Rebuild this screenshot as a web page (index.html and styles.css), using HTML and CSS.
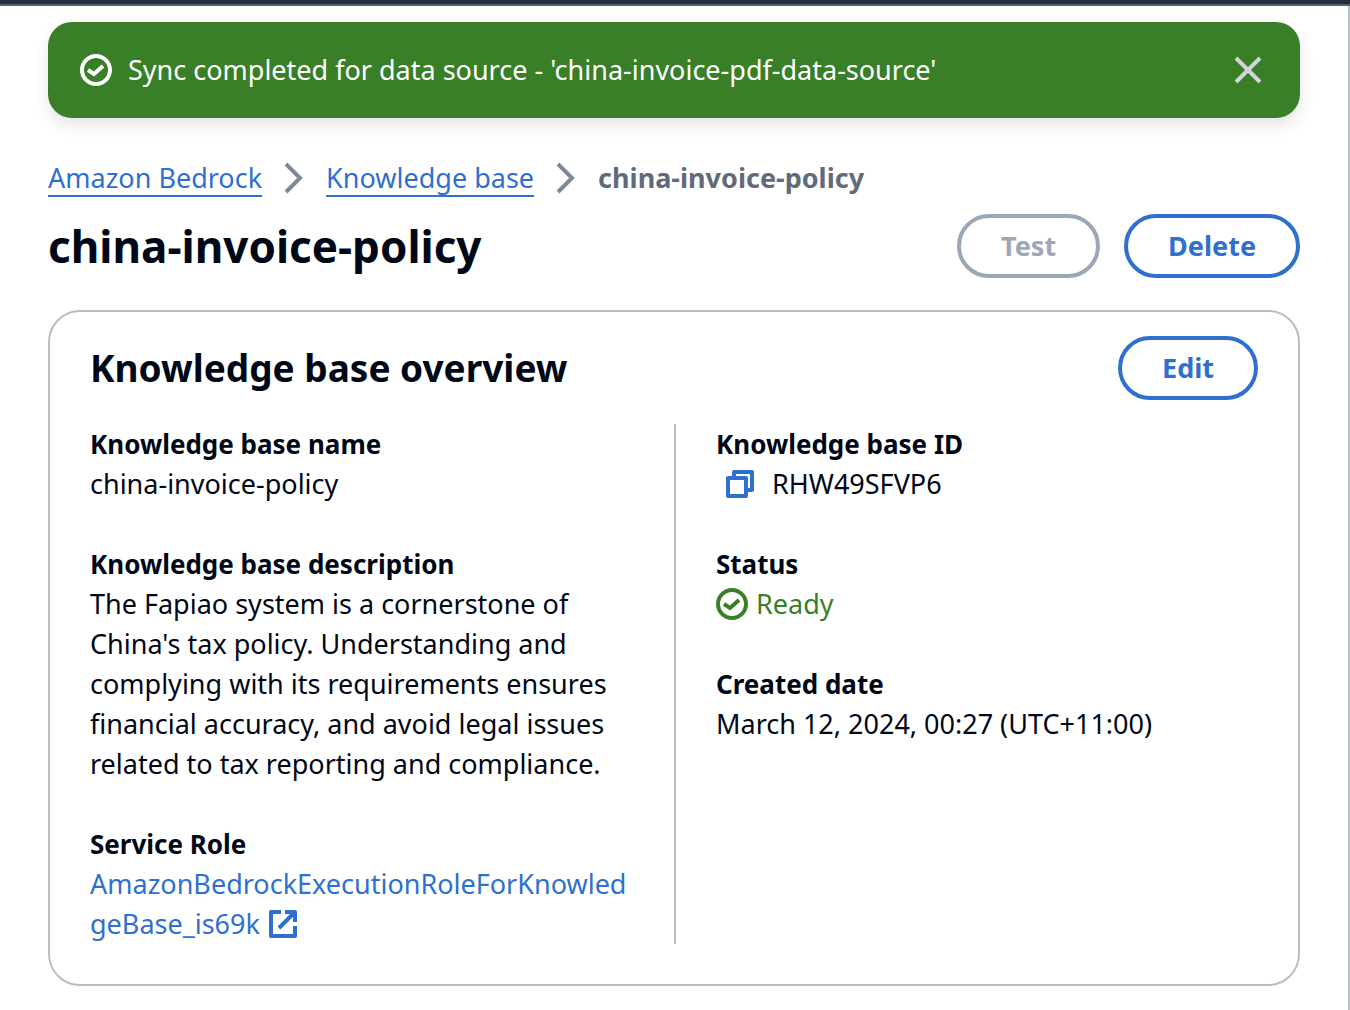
FILE: index.html
```html
<!DOCTYPE html>
<html lang="en">
<head>
<meta charset="utf-8">
<meta name="viewport" content="width=device-width, initial-scale=1">
<title>china-invoice-policy</title>
<link rel="stylesheet" href="styles.css">
</head>
<body>
<div class="topbar"></div>
<main class="page">
  <div class="flash" role="status">
    <svg class="icon" viewBox="0 0 16 16" aria-hidden="true"><circle cx="8" cy="8" r="7"/><path d="m4 8 3 2 4.500-4"/></svg>
    <span class="flash-text">Sync completed for data source - 'china-invoice-pdf-data-source'</span>
    <button class="icon-button dismiss" type="button" aria-label="Dismiss">
      <svg class="icon" viewBox="0 0 16 16" aria-hidden="true"><path d="m2 2 12 12M14 2 2 14"/></svg>
    </button>
  </div>

  <nav aria-label="Breadcrumbs">
    <ol class="breadcrumbs">
      <li><a class="crumb" href="#bedrock">Amazon Bedrock</a></li>
      <li><svg class="icon chevron" viewBox="0 0 16 16" aria-hidden="true"><path d="m4 1 7 7-7 7"/></svg><a class="crumb" href="#knowledge-base">Knowledge base</a></li>
      <li><svg class="icon chevron" viewBox="0 0 16 16" aria-hidden="true"><path d="m4 1 7 7-7 7"/></svg><span class="crumb-current">china-invoice-policy</span></li>
    </ol>
  </nav>

  <header class="page-header">
    <h1>china-invoice-policy</h1>
    <div class="actions">
      <button class="button" type="button" disabled>Test</button>
      <button class="button" type="button">Delete</button>
    </div>
  </header>

  <section class="card">
    <header class="card-header">
      <h2>Knowledge base overview</h2>
      <button class="button" type="button">Edit</button>
    </header>
    <div class="columns">
      <dl class="column">
        <div><dt>Knowledge base name</dt><dd>china-invoice-policy</dd></div>
        <div><dt>Knowledge base description</dt><dd>The Fapiao system is a cornerstone of China's tax policy. Understanding and complying with its requirements ensures financial accuracy, and avoid legal issues related to tax reporting and compliance.</dd></div>
        <div><dt>Service Role</dt><dd><a class="role-link" href="#role">AmazonBedrockExecutionRoleForKnowledgeBase_is69k <svg class="icon external" viewBox="0 0 16 16" aria-hidden="true"><path d="M14 9v5H2V2h5M9 2h5v5M14 2l-8 8"/></svg></a></dd></div>
      </dl>
      <dl class="column">
        <div><dt>Knowledge base ID</dt><dd class="copy-row"><button class="icon-button copy" type="button" aria-label="Copy knowledge base ID"><svg class="icon" viewBox="0 0 16 16" aria-hidden="true"><path d="M2 5h9v9H2zM5 5V2h9v9h-3"/></svg></button>RHW49SFVP6</dd></div>
        <div><dt>Status</dt><dd class="status"><svg class="icon" viewBox="0 0 16 16" aria-hidden="true"><circle cx="8" cy="8" r="7"/><path d="m4 8 3 2 4.500-4"/></svg>Ready</dd></div>
        <div><dt>Created date</dt><dd>March 12, 2024, 00:27 (UTC+11:00)</dd></div>
      </dl>
    </div>
  </section>
</main>
</body>
</html>
```
FILE: styles.css
```css
* {
  box-sizing: border-box;
}

body {
  display: flex;
  flex-direction: column;
  min-height: 100vh;
  margin: 0;
  background: #fff;
  color: #000716;
  font: 27px/40px "Noto Sans", "Open Sans", sans-serif;
}

h1, h2, ol, dl, dd {
  margin: 0;
  padding: 0;
}

.topbar {
  height: 6px;
  background: #232f3e;
  border-bottom: 2px solid #5a606b;
}

.page {
  flex: 1;
  padding: 16px 48px 24px;
  border-right: 2px solid #b6bec9;
}

.icon {
  flex: none;
  width: 32px;
  height: 32px;
  fill: none;
  stroke: currentColor;
  stroke-width: 2;
}

.icon-button {
  display: flex;
  padding: 0;
  border: 0;
  background: none;
  cursor: pointer;
}

.flash {
  display: flex;
  align-items: center;
  gap: 16px;
  min-height: 96px;
  padding: 24px 36px 24px 32px;
  border-radius: 24px;
  background: #387f27;
  color: #fff;
  box-shadow: 0 8px 16px rgba(0, 7, 22, 0.1);
}

.flash-text {
  flex: 1;
}

.dismiss {
  color: #d1d5db;
}

.breadcrumbs {
  display: flex;
  flex-wrap: wrap;
  gap: 16px;
  margin-top: 40px;
  list-style: none;
}

.breadcrumbs li {
  display: flex;
  align-items: center;
  gap: 16px;
}

.chevron {
  color: #7d8998;
}

.crumb {
  color: #2f6fd0;
  text-decoration: underline;
  text-decoration-thickness: 2px;
  text-underline-offset: 7px;
  text-decoration-skip-ink: none;
}

.crumb-current {
  color: #5f6b7a;
  font-weight: 700;
}

.page-header,
.card-header {
  display: flex;
  align-items: center;
  justify-content: space-between;
  gap: 24px;
}

.page-header {
  margin: 16px 0 32px;
}

h1 {
  font-size: 44px;
  line-height: 60px;
}

h2 {
  font-size: 37px;
  line-height: 48px;
}

.actions {
  display: flex;
  gap: 24px;
}

.button {
  height: 64px;
  padding: 0 40px;
  border: 4px solid #2f6fd0;
  border-radius: 32px;
  background: #fff;
  color: #2f6fd0;
  font: inherit;
  font-weight: 700;
  cursor: pointer;
}

.button:disabled {
  border-color: #9ba7b6;
  color: #9ba7b6;
  cursor: default;
}

.card {
  padding: 24px 40px 40px;
  border: 2px solid #b6bec9;
  border-radius: 32px;
}

.columns {
  display: grid;
  grid-template-columns: 1fr 1fr;
  margin-top: 24px;
}

.column {
  display: flex;
  flex-direction: column;
  gap: 40px;
  padding-right: 40px;
}

.column + .column {
  padding: 0 0 0 40px;
  border-left: 2px solid #b6bec9;
}

dt {
  font-size: 26px;
  font-weight: 700;
}

.role-link {
  color: #2f6fd0;
  text-decoration: none;
  word-break: break-all;
}

.external {
  vertical-align: -6px;
  stroke-linejoin: round;
}

.copy-row {
  display: flex;
  align-items: center;
  gap: 16px;
}

.copy {
  padding-left: 8px;
  color: #2f6fd0;
  stroke-linejoin: round;
}

.status {
  display: flex;
  align-items: center;
  gap: 8px;
  color: #387f27;
}
```
